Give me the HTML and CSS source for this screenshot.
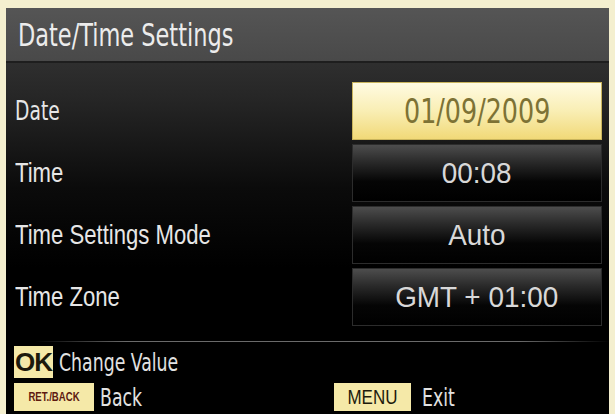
FILE: index.html
```html
<!DOCTYPE html>
<html lang="en">
<head>
  <meta charset="UTF-8">
  <meta name="viewport" content="width=device-width, initial-scale=1.0">
  <title>Date/Time Settings</title>
  <link rel="stylesheet" href="styles.css">
</head>
<body>
  <div class="panel">
    <div class="title-bar">
      <h1 class="title"><span class="narrow">Date/Time Settings</span></h1>
    </div>

    <div class="settings">
      <div class="row">
        <span class="label label-date"><span class="narrow">Date</span></span>
        <span class="value selected"><span class="narrow">01/09/2009</span></span>
      </div>
      <div class="row">
        <span class="label"><span class="narrow">Time</span></span>
        <span class="value"><span class="narrow">00:08</span></span>
      </div>
      <div class="row">
        <span class="label"><span class="narrow">Time Settings Mode</span></span>
        <span class="value"><span class="narrow">Auto</span></span>
      </div>
      <div class="row">
        <span class="label"><span class="narrow">Time Zone</span></span>
        <span class="value"><span class="narrow">GMT + 01:00</span></span>
      </div>
    </div>

    <div class="footer">
      <div class="hint">
        <span class="key key-ok">OK</span>
        <span class="hint-text"><span class="narrow">Change Value</span></span>
      </div>
      <div class="hint-line">
        <div class="hint">
          <span class="key key-back"><span class="narrow">RET./BACK</span></span>
          <span class="hint-text"><span class="narrow">Back</span></span>
        </div>
        <div class="hint hint-menu">
          <span class="key key-menu"><span class="narrow">MENU</span></span>
          <span class="hint-text"><span class="narrow">Exit</span></span>
        </div>
      </div>
    </div>
  </div>
</body>
</html>
```

FILE: styles.css
```css
/* Page */
body {
  margin: 0;
  height: 414px;
  overflow: hidden;
  background: #f4efcf;
  font-family: 'DejaVu Sans Condensed', 'DejaVu Sans', sans-serif;
}

/* the TV font is tall and squeezed, so text is scaled sideways */
.narrow {
  display: inline-block;
  white-space: nowrap;
  transform-origin: left center;
}

.panel {
  margin: 8px 6px 0 6px;
  height: 406px;
  display: flex;
  flex-direction: column;
  background: linear-gradient(180deg, #3c3c3c 0px, #262626 90px, #0b0b0b 180px, #000 260px);
}

/* Title */
.title-bar {
  height: 53px;
  display: flex;
  align-items: center;
  padding-left: 12px;
  background: linear-gradient(180deg, #555555, #494949);
  border-bottom: 2px solid #1e1e1e;
}

.title {
  margin: 0;
  font-size: 32px;
  font-weight: normal;
  color: #ececec;
  line-height: 1;
}

.title .narrow {
  transform: scaleX(0.78);
}

/* Settings rows */
.settings {
  display: flex;
  flex-direction: column;
  gap: 4px;
  padding: 19px 7px 0 9px;
}

.row {
  display: flex;
  align-items: center;
  justify-content: space-between;
  height: 58px;
}

.label {
  font-family: 'Liberation Sans', 'Arial', sans-serif;
  font-size: 28px;
  color: #e6e6e6;
  line-height: 1;
}

.label .narrow {
  transform: scaleX(0.79);
}

.label-date {
  font-family: 'DejaVu Sans Condensed', sans-serif;
  font-size: 26px;
}

.label-date .narrow {
  transform: scaleX(0.8);
}

.value {
  width: 248px;
  height: 56px;
  display: flex;
  align-items: center;
  justify-content: center;
  font-family: 'Liberation Sans', 'Arial', sans-serif;
  font-size: 30px;
  color: #d8d8d8;
  border: 1px solid #2c2c2c;
  background: linear-gradient(180deg, #4d4d4d 0%, #2a2a2a 30%, #050505 65%, #000 100%);
}

.value .narrow {
  transform-origin: center;
  transform: scaleX(0.93);
}

.value.selected {
  font-family: 'DejaVu Sans Condensed', sans-serif;
  font-size: 34px;
  color: #7d7235;
  border-color: #c9b45c;
  background: linear-gradient(180deg, #fffbe2 0%, #f9eeb4 50%, #f1d978 100%);
}

.value.selected .narrow {
  transform: scaleX(0.83);
}

/* Footer */
.footer {
  margin-top: 15px;
  padding: 4px 8px 0 8px;
  border-top: 1px solid transparent;
  border-image: linear-gradient(90deg, transparent 5%, #6a6a6a 20%, #6a6a6a 85%, transparent 100%) 1;
}

.hint-line {
  display: flex;
  margin-top: 5px;
}

.hint {
  display: flex;
  align-items: center;
  gap: 6px;
}

.hint-menu {
  margin-left: 179px;
  gap: 11px;
}

.hint-text {
  font-size: 25px;
  color: #e2e2e2;
  line-height: 1;
  width: 40px;
}

.hint:first-child > .hint-text {
  width: auto;
}

.hint-text .narrow {
  transform: scaleX(0.77);
}

.key {
  display: flex;
  align-items: center;
  justify-content: center;
  background: #f5e9a8;
  color: #1d1a0c;
  font-family: 'Liberation Sans', 'Arial', sans-serif;
}

.key-ok {
  width: 39px;
  height: 32px;
  font-size: 26px;
  font-weight: bold;
  letter-spacing: -1px;
}

.key-back {
  width: 80px;
  height: 28px;
  font-size: 12px;
  font-weight: bold;
  color: #5e1a10;
}

.key-back .narrow {
  transform-origin: center;
  transform: scaleX(0.8);
}

.key-menu {
  width: 77px;
  height: 28px;
  font-size: 20px;
}

.key-menu .narrow {
  transform-origin: center;
  transform: scaleX(0.85);
}
```
